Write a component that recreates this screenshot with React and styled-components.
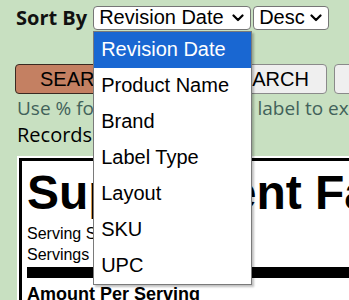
import styled, { createGlobalStyle } from "styled-components";

const GlobalStyle = createGlobalStyle`
	body {
		margin: 0;
		background-color: #c8e0c1;
		font-family: "Open Sans", sans-serif;
		overflow: hidden;
	}
`;

const sortOptions = ["Revision Date", "Product Name", "Brand", "Label Type", "Layout", "SKU", "UPC"];

function Chevron() {
	return (
		<svg width="12" height="8" viewBox="0 0 12 8" fill="none">
			<path d="M1.5 1.5 L6 6 L10.5 1.5" stroke="#000" strokeWidth="2.2" strokeLinecap="round" strokeLinejoin="round" />
		</svg>
	);
}

function App() {
	return (
		<StyledPage>
			<GlobalStyle />
			<StyledSortRow>
				<StyledSortLabel>Sort By</StyledSortLabel>
				<StyledSelectWrap>
					<StyledSelect $width={158}>
						Revision Date
						<Chevron />
					</StyledSelect>
					<StyledDropdown>
						{sortOptions.map((opt, i) => (
							<StyledOption key={opt} $active={i === 0}>
								{opt}
							</StyledOption>
						))}
					</StyledDropdown>
				</StyledSelectWrap>
				<StyledSelect $width={76}>
					Desc
					<Chevron />
				</StyledSelect>
			</StyledSortRow>
			<StyledButtonRow>
				<StyledButton $primary>SEARCH</StyledButton>
				<StyledButton>NEW SEARCH</StyledButton>
				<StyledButton>CLEAR</StyledButton>
			</StyledButtonRow>
			<StyledHint>Use % for a wildcard in the label to expand your search</StyledHint>
			<StyledRecords>Records found: 1</StyledRecords>
			<StyledLabel>
				<StyledLabelInner>
					<StyledFactsTitle>Supplement Facts</StyledFactsTitle>
					<StyledServing>Serving Size 2 Capsules</StyledServing>
					<StyledServing>Servings Per Container 30</StyledServing>
					<StyledThickBar />
					<StyledAmount>Amount Per Serving</StyledAmount>
				</StyledLabelInner>
			</StyledLabel>
		</StyledPage>
	);
}

const StyledPage = styled.div`
	width: 349px;
	height: 300px;
	overflow: hidden;
	padding-top: 4px;
	box-sizing: border-box;
`;
const StyledSortRow = styled.div`
	display: flex;
	align-items: center;
	padding-left: 16px;
	gap: 2px;
	white-space: nowrap;
`;
const StyledSortLabel = styled.span`
	font-size: 20px;
	font-weight: 700;
	color: #111;
	margin-right: 4px;
`;
const StyledSelectWrap = styled.div`
	position: relative;
`;
const StyledSelect = styled.div`
	width: ${(p) => p.$width}px;
	height: 24px;
	box-sizing: border-box;
	display: flex;
	align-items: center;
	justify-content: space-between;
	padding: 0 6px 0 5px;
	background: #fff;
	border: 1px solid #767676;
	border-radius: 4px;
	font-family: "Liberation Sans", Arial, sans-serif;
	font-size: 20px;
	color: #000;
	svg {
		flex-shrink: 0;
	}
`;
const StyledDropdown = styled.div`
	position: absolute;
	top: 25px;
	left: 0;
	width: 159px;
	box-sizing: border-box;
	background: #fff;
	border: 1px solid #7a7a7a;
	box-shadow: 2px 2px 2px rgba(0, 0, 0, 0.25);
	z-index: 5;
`;
const StyledOption = styled.div`
	height: 36px;
	display: flex;
	align-items: center;
	padding-left: 7px;
	font-family: "Liberation Sans", Arial, sans-serif;
	font-size: 20px;
	color: ${(p) => (p.$active ? "#fff" : "#000")};
	background: ${(p) => (p.$active ? "#1967d2" : "#fff")};
`;
const StyledButtonRow = styled.div`
	display: flex;
	gap: 7px;
	margin: 33px 0 0 15px;
	white-space: nowrap;
`;
const StyledButton = styled.button`
	height: 30px;
	padding: 0 ${(p) => (p.$primary ? 24 : 17)}px;
	flex-shrink: 0;
	font-family: "Liberation Sans", Arial, sans-serif;
	font-size: 20px;
	color: #000;
	background: ${(p) => (p.$primary ? "#c48062" : "#efefef")};
	border: 1px solid ${(p) => (p.$primary ? "#3a2a22" : "#8a8a8a")};
	border-radius: 4px;
`;
const StyledHint = styled.p`
	margin: 2px 0 0 17px;
	font-size: 19px;
	line-height: 24px;
	color: #42625a;
	white-space: nowrap;
`;
const StyledRecords = styled.p`
	margin: 2px 0 0 17px;
	font-size: 20px;
	line-height: 26px;
	color: #000;
	white-space: nowrap;
`;
const StyledLabel = styled.div`
	margin: 8px 0 0 17px;
	width: 400px;
	padding: 2px;
	background: #fff;
`;
const StyledLabelInner = styled.div`
	border: 3px solid #000;
	padding: 4px 6px 0 5px;
	font-family: "Liberation Sans", Arial, sans-serif;
	color: #000;
	white-space: nowrap;
`;
const StyledFactsTitle = styled.h1`
	margin: 0 0 3px;
	font-size: 48px;
	font-weight: 700;
	line-height: 55px;
`;
const StyledServing = styled.div`
	font-size: 16px;
	line-height: 21px;
`;
const StyledThickBar = styled.div`
	height: 11px;
	background: #000;
	margin-top: 2px;
`;
const StyledAmount = styled.div`
	margin-top: 6px;
	font-size: 18px;
	font-weight: 700;
`;

export default App;
